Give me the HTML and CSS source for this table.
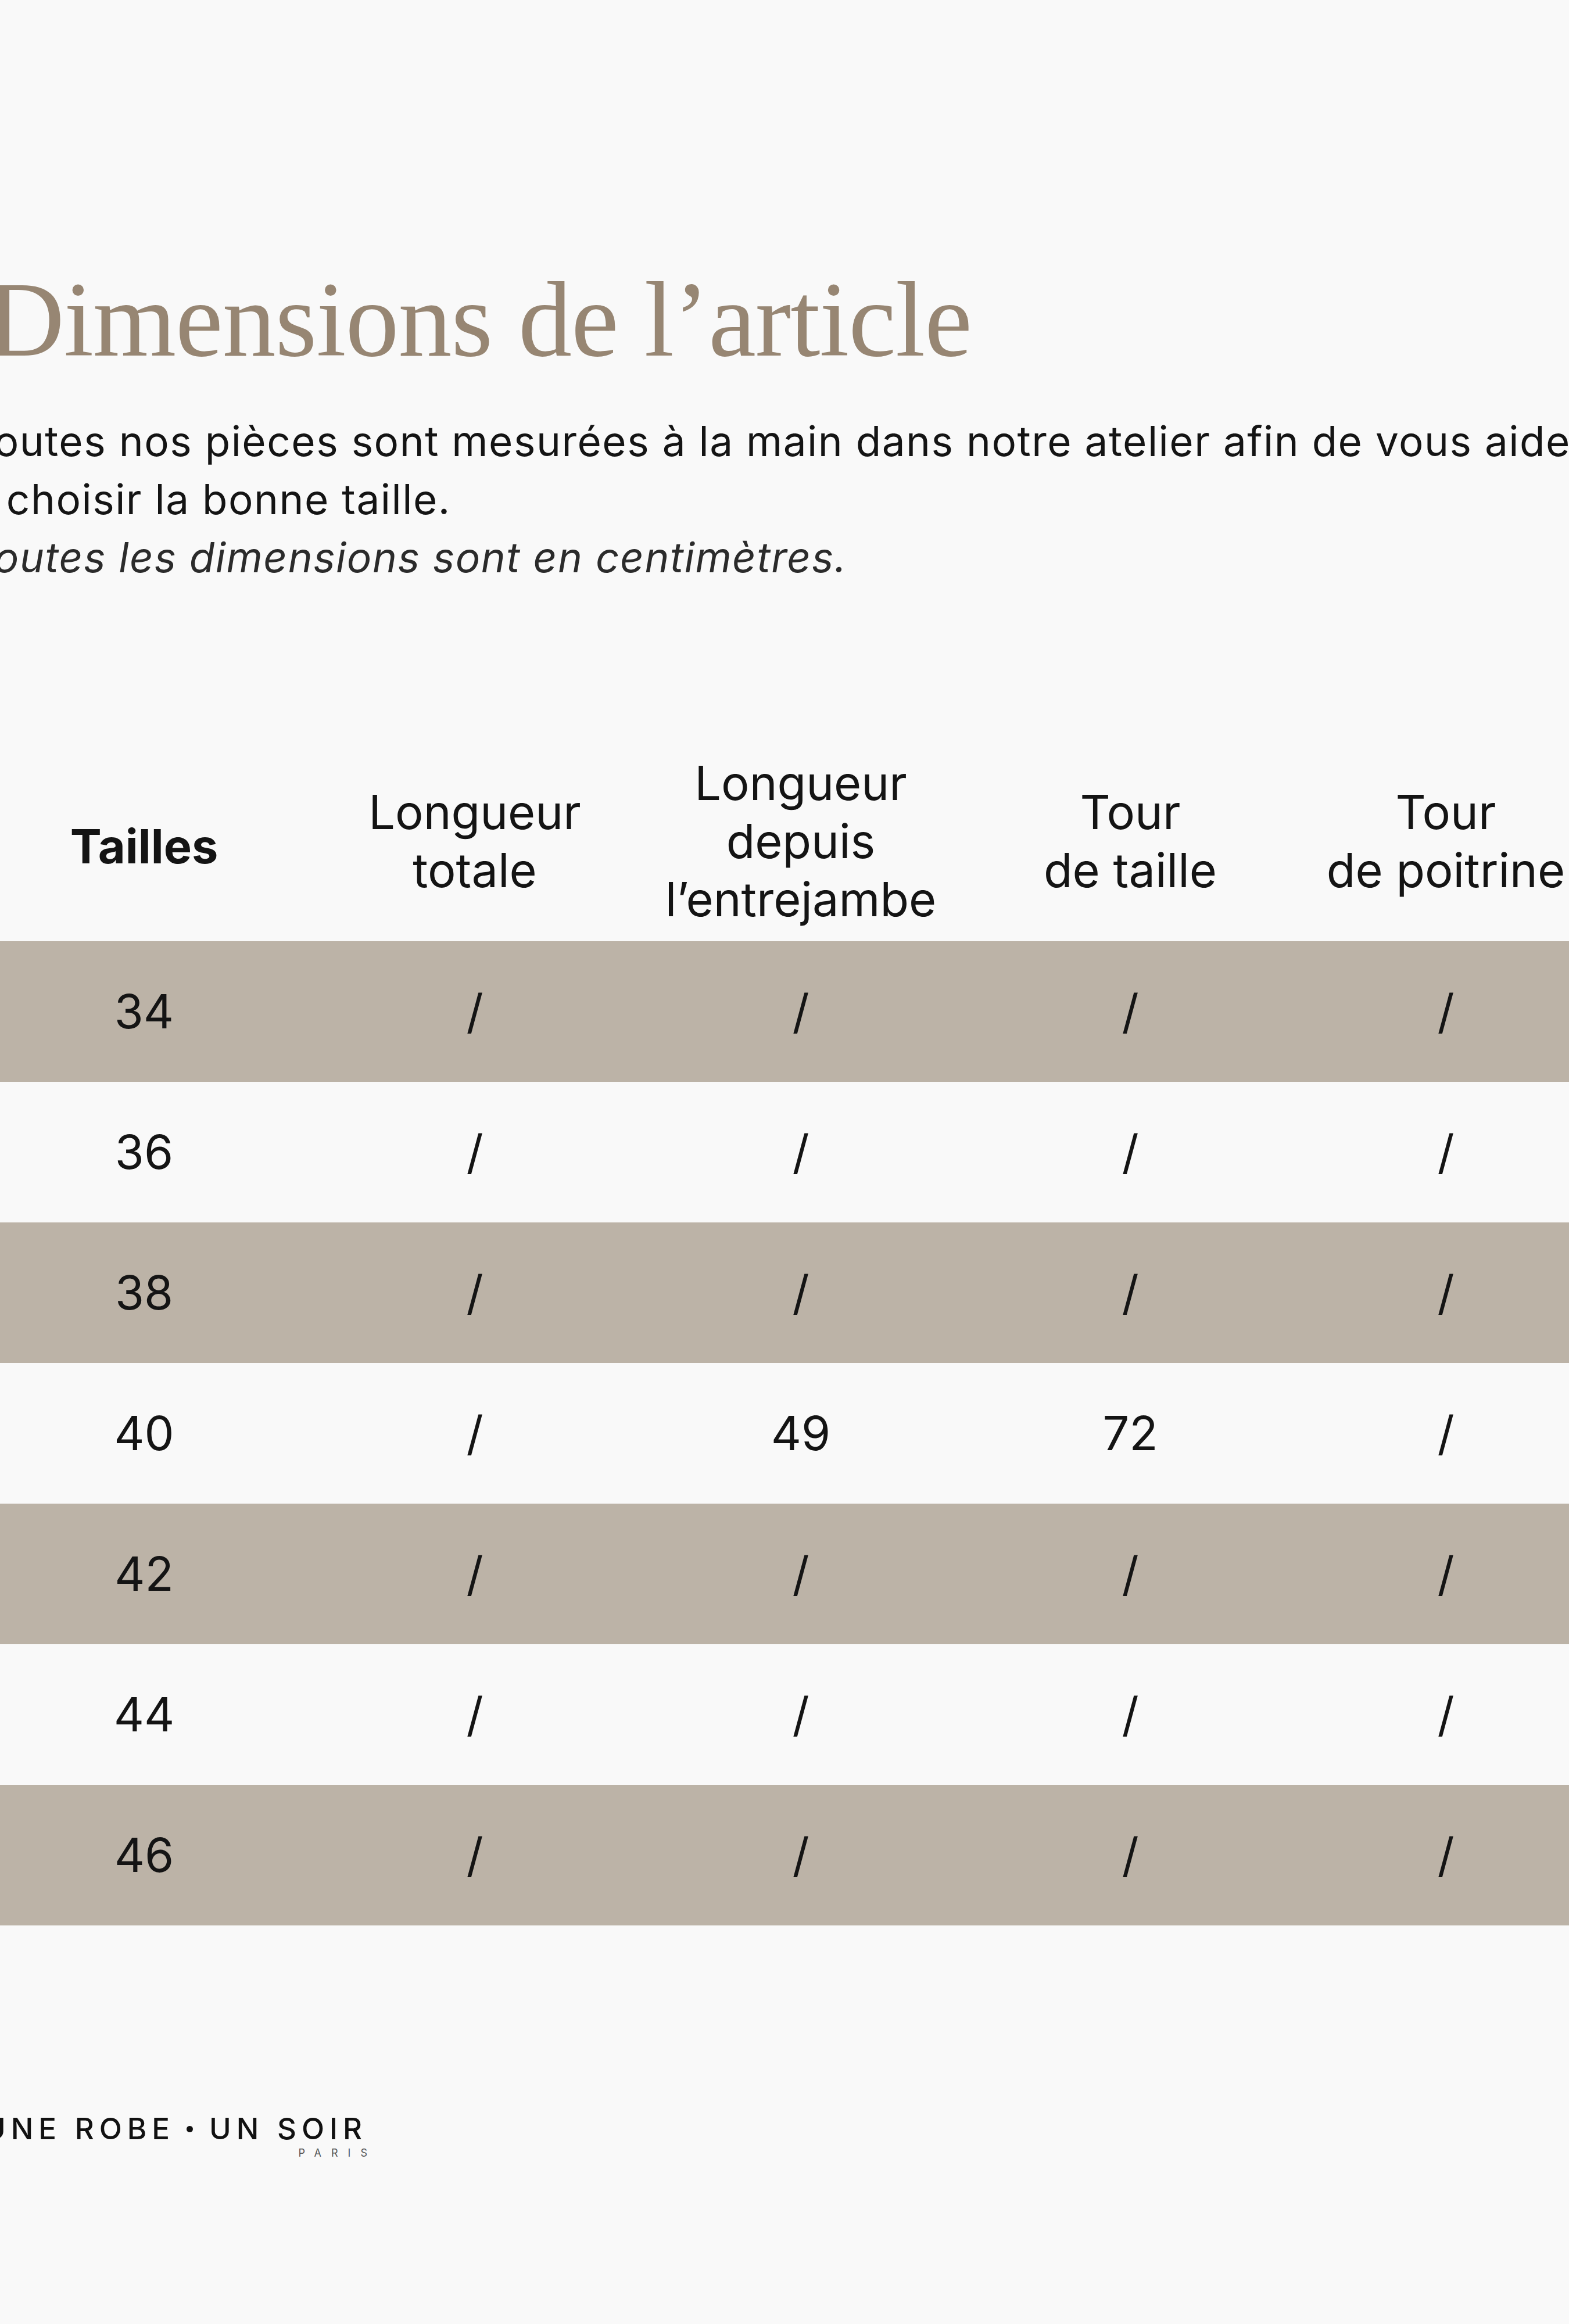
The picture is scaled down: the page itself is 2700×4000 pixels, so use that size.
FILE: index.html
```html
<!DOCTYPE html>
<html lang="fr">
<head>
<meta charset="utf-8">
<title>Dimensions de l’article</title>
<link rel="stylesheet" href="styles.css">
</head>
<body>
<main class="page">
  <h1 class="title">Dimensions de l’article</h1>
  <p class="intro">Toutes nos pièces sont mesurées à la main dans notre atelier afin de vous aider<br>à choisir la bonne taille.<br><em class="note">Toutes les dimensions sont en centimètres.</em></p>

  <table class="sizes">
    <colgroup>
      <col class="c1"><col class="c2"><col class="c3"><col class="c4"><col class="c5"><col class="c6">
    </colgroup>
    <thead>
      <tr>
        <th class="first">Tailles</th>
        <th>Longueur<br>totale</th>
        <th>Longueur<br>depuis<br>l’entrejambe</th>
        <th>Tour<br>de taille</th>
        <th>Tour<br>de poitrine</th>
        <th></th>
      </tr>
    </thead>
    <tbody>
      <tr class="odd"><td>34</td><td>/</td><td>/</td><td>/</td><td>/</td><td></td></tr>
      <tr><td>36</td><td>/</td><td>/</td><td>/</td><td>/</td><td></td></tr>
      <tr class="odd"><td>38</td><td>/</td><td>/</td><td>/</td><td>/</td><td></td></tr>
      <tr><td>40</td><td>/</td><td>49</td><td>72</td><td>/</td><td></td></tr>
      <tr class="odd"><td>42</td><td>/</td><td>/</td><td>/</td><td>/</td><td></td></tr>
      <tr><td>44</td><td>/</td><td>/</td><td>/</td><td>/</td><td></td></tr>
      <tr class="odd"><td>46</td><td>/</td><td>/</td><td>/</td><td>/</td><td></td></tr>
    </tbody>
  </table>

  <footer class="brand">
    <div class="brand-name">UNE ROBE<span class="dot"></span>UN SOIR</div>
    <div class="brand-city">PARIS</div>
  </footer>
</main>
</body>
</html>
```

FILE: styles.css
```css
html, body {
  margin: 0;
  padding: 0;
  background: #f9f9f9;
  overflow: hidden;
}

body {
  color: #141414;
  font-family: "Inter", "Lato", "Liberation Sans", sans-serif;
}

.page {
  margin-left: -40px;
  padding-top: 449px;
}

.title {
  margin: 0;
  font-family: "Liberation Serif", serif;
  font-weight: 400;
  font-size: 184px;
  line-height: 202px;
  letter-spacing: -1px;
  color: #978673;
  padding-left: 18px;
}

.intro {
  margin: 58px 0 0 -12px;
  font-size: 71px;
  line-height: 100px;
  letter-spacing: 1.5px;
  white-space: nowrap;
}

.note {
  color: #2b2b2b;
}

.sizes {
  margin-top: 267px;
  border-collapse: collapse;
  table-layout: fixed;
  width: 3384px;
  font-size: 81px;
}

.c1 { width: 576px; }
.c2 { width: 562px; }
.c3 { width: 560px; }
.c4 { width: 574px; }
.c5 { width: 512px; }
.c6 { width: 600px; }

.sizes th {
  font-weight: 400;
  line-height: 100px;
  padding: 22px 0;
  text-align: center;
  vertical-align: middle;
}

.sizes th.first {
  font-weight: 700;
  padding-top: 40px;
}

.sizes td {
  height: 242px;
  padding: 0;
  text-align: center;
  vertical-align: middle;
  line-height: 100px;
}

.sizes tr.odd td {
  background: #bcb3a7;
}

.brand {
  margin-top: 325px;
  margin-left: 12px;
  display: inline-flex;
  flex-direction: column;
  align-items: flex-end;
}

.brand-name {
  font-size: 51px;
  line-height: 50px;
  font-weight: 500;
  letter-spacing: 9px;
  color: #111;
  display: flex;
  align-items: center;
  white-space: pre;
}

.dot {
  display: inline-block;
  width: 11px;
  height: 11px;
  border-radius: 50%;
  background: #111;
  margin: 0 28px 0 20px;
}

.brand-city {
  margin-top: 8px;
  font-size: 18px;
  line-height: 18px;
  letter-spacing: 17px;
  margin-right: -17px;
  color: #555;
}
```
